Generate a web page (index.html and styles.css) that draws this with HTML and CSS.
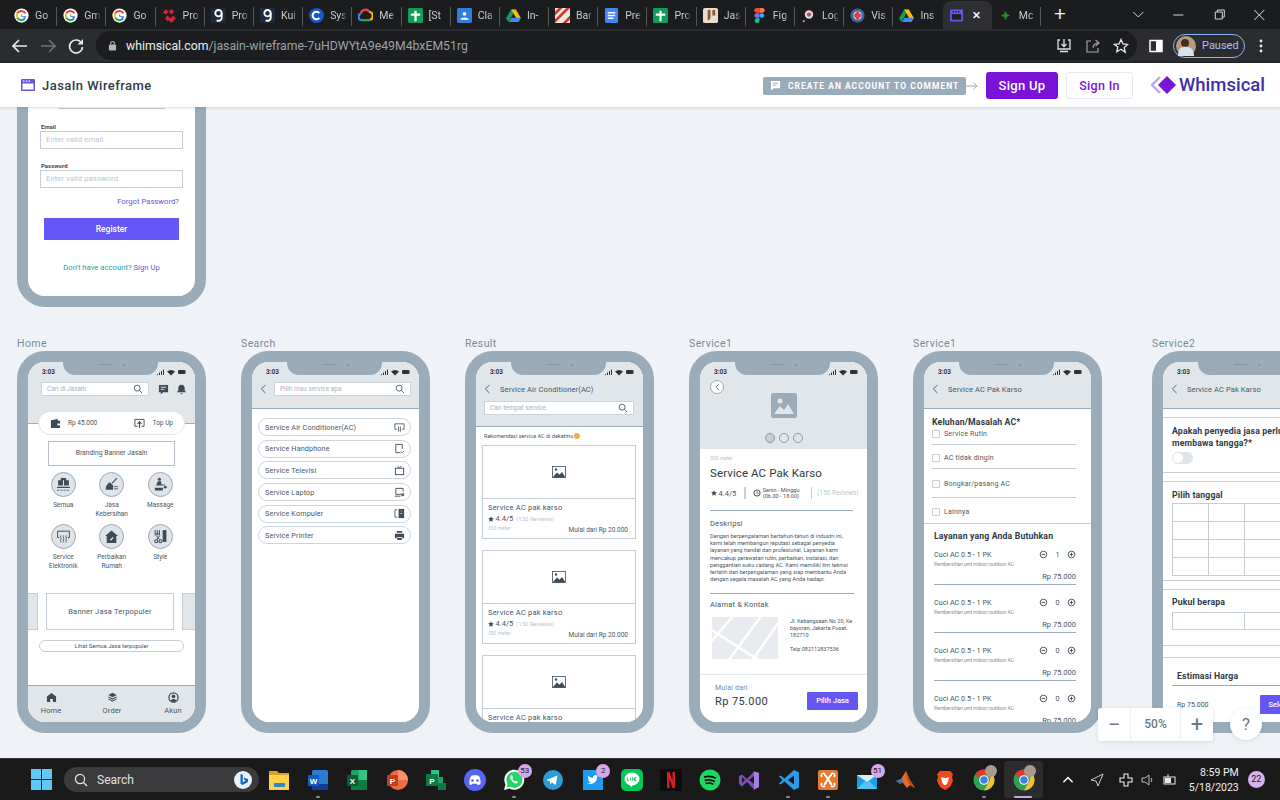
FILE: index.html
```html
<!DOCTYPE html>
<html lang="id">
<head>
  <meta charset="UTF-8">
  <title>JasaIn Wireframe</title>
  <link rel="stylesheet" href="styles.css">
</head>
<body>

<!-- icon sprites -->
<svg class="defs" xmlns="http://www.w3.org/2000/svg">
  <symbol id="f-google" viewBox="0 0 16 16">
    <circle cx="8" cy="8" r="7.6" fill="#fff"/>
    <path d="M12.2 5.6A5 5 0 0 0 3.5 5.7" fill="none" stroke="#ea4335" stroke-width="2.2"/>
    <path d="M3.5 5.7a5 5 0 0 0 0 4.6" fill="none" stroke="#fbbc05" stroke-width="2.2"/>
    <path d="M3.5 10.3a5 5 0 0 0 8.2.9" fill="none" stroke="#34a853" stroke-width="2.2"/>
    <path d="M8 7v2h4.6a5 5 0 0 1-1 2.3L10.2 10" fill="#4285f4" stroke="#4285f4" stroke-width=".8"/>
  </symbol>
  <symbol id="f-zig" viewBox="0 0 16 16">
    <path d="M1 5l3-4 3 3 3-3 3 3-3 3-3-3-3 3zM3 11l3-3 3 3 3-3 3 3-5 5-3-3-1 1z" fill="#d8222f"/>
  </symbol>
  <symbol id="f-nine" viewBox="0 0 16 16">
    <rect width="16" height="16" fill="#1e2b3a"/>
    <circle cx="8" cy="5.5" r="3.4" fill="none" stroke="#fff" stroke-width="2"/>
    <path d="M11.4 5.5v5c0 2.5-2 3.5-5.5 3" fill="none" stroke="#fff" stroke-width="2"/>
  </symbol>
  <symbol id="f-c" viewBox="0 0 16 16">
    <circle cx="8" cy="8" r="8" fill="#1a56c4"/>
    <path d="M11 5.5a4 4 0 1 0 0 5" fill="none" stroke="#fff" stroke-width="2.2"/>
  </symbol>
  <symbol id="f-cloud" viewBox="0 0 16 16">
    <path d="M4 13a3.6 3.6 0 0 1-1-7" fill="none" stroke="#4285f4" stroke-width="2.4"/>
    <path d="M3 6a5 5 0 0 1 9-2" fill="none" stroke="#ea4335" stroke-width="2.4"/>
    <path d="M12 4a4.5 4.5 0 0 1 1 8.6" fill="none" stroke="#fbbc05" stroke-width="2.4"/>
    <path d="M13 13H4" stroke="#34a853" stroke-width="2.4"/>
  </symbol>
  <symbol id="f-sheet" viewBox="0 0 16 16">
    <rect width="16" height="16" rx="1.5" fill="#0f9d58"/>
    <path d="M8 3v11M3 7h10" stroke="#fff" stroke-width="2.4"/>
  </symbol>
  <symbol id="f-class" viewBox="0 0 16 16">
    <rect width="16" height="16" rx="1.5" fill="#2f7de1"/>
    <circle cx="8" cy="6.2" r="2" fill="#fff"/>
    <path d="M3.5 12.5c.5-3 8.5-3 9 0z" fill="#fff"/>
  </symbol>
  <symbol id="f-drive" viewBox="0 0 16 16">
    <path d="M5.5 1.5h5L5 11 2.5 15 0 11z" fill="#0f9d58"/>
    <path d="M10.5 1.5L16 11h-5L5.5 1.5z" fill="#fbbc05"/>
    <path d="M3 15l2.8-4.5H16L13.5 15z" fill="#4285f4"/>
  </symbol>
  <symbol id="f-stripes" viewBox="0 0 16 16">
    <rect width="16" height="16" fill="#f1e6dc"/>
    <path d="M0 4l4-4h4L0 8zM0 12L12 0h4L0 16zM8 16L16 8v4l-4 4z" fill="#c93a2f"/>
  </symbol>
  <symbol id="f-docs" viewBox="0 0 16 16">
    <rect x="1" width="14" height="16" rx="1.5" fill="#4285f4"/>
    <path d="M4 5h8M4 8h8M4 11h6" stroke="#fff" stroke-width="1.5"/>
  </symbol>
  <symbol id="f-jas" viewBox="0 0 16 16">
    <rect width="16" height="16" rx="2" fill="#e8dccb"/>
    <path d="M5 2h3v8c0 2-1.5 3-3 3zM10 2h3v6h-3z" fill="#8a5a3a"/>
  </symbol>
  <symbol id="f-figma" viewBox="0 0 16 16">
    <path d="M5 0h3v5H5a2.5 2.5 0 0 1 0-5z" fill="#f24e1e"/>
    <path d="M8 0h3a2.5 2.5 0 0 1 0 5H8z" fill="#ff7262"/>
    <path d="M5 5.5h3v5H5a2.5 2.5 0 0 1 0-5z" fill="#a259ff"/>
    <circle cx="10.5" cy="8" r="2.5" fill="#1abcfe"/>
    <path d="M5 11h3v2.5a2.5 2.5 0 1 1-3-2.5z" fill="#0acf83"/>
  </symbol>
  <symbol id="f-log" viewBox="0 0 16 16">
    <circle cx="8.5" cy="7" r="4.5" fill="#d9d9e6"/>
    <circle cx="8.5" cy="7" r="2.2" fill="#c8443d"/>
    <circle cx="3" cy="14" r="1.2" fill="#6fa0d8"/>
  </symbol>
  <symbol id="f-vis" viewBox="0 0 16 16">
    <circle cx="8" cy="8" r="7.5" fill="#2f6da6"/>
    <circle cx="8" cy="8" r="4.5" fill="#e9e9ef"/>
    <path d="M8 3l4.5 5L8 13 3.5 8z" fill="#d9414c"/>
  </symbol>
  <symbol id="f-whim" viewBox="0 0 16 16">
    <rect x="1" y="1.5" width="14" height="13" rx="1.5" fill="#6557e8"/>
    <rect x="3" y="6.5" width="10" height="6" fill="#1f2023"/>
    <path d="M3.5 4H5M6.5 4H8M9.5 4H11" stroke="#1f2023" stroke-width="1.5"/>
  </symbol>
  <symbol id="f-mc" viewBox="0 0 16 16">
    <path d="M8 3l1.5 3.5L13 8l-3.5 1.5L8 13 6.5 9.5 3 8l3.5-1.5z" fill="#1f8a2c"/>
  </symbol>

  <symbol id="i-search" viewBox="0 0 12 12">
    <circle cx="5" cy="5" r="3.6" fill="none" stroke="currentColor" stroke-width="1"/>
    <path d="M7.8 7.8l3 3" stroke="currentColor" stroke-width="1"/>
  </symbol>
  <symbol id="i-back" viewBox="0 0 8 12">
    <path d="M6.5 1L1.5 6l5 5" fill="none" stroke="currentColor" stroke-width="1"/>
  </symbol>
  <symbol id="i-chat" viewBox="0 0 12 12">
    <path d="M1 1h10v8H5.5L3 11.5V9H1z" fill="currentColor"/>
    <path d="M3 3.5h6M3 5.8h4" stroke="#e1e6ea" stroke-width="1"/>
  </symbol>
  <symbol id="i-bell" viewBox="0 0 12 12">
    <path d="M6 .8c2.4 0 3.5 1.8 3.5 4v2.4L11 9H1l1.5-1.8V4.8C2.5 2.6 3.6.8 6 .8z" fill="currentColor"/>
    <path d="M4.8 10h2.4a1.2 1.2 0 0 1-2.4 0z" fill="currentColor"/>
  </symbol>
  <symbol id="i-wallet" viewBox="0 0 12 12">
    <path d="M1 2.5L8.5 1v2H11v8H1z" fill="currentColor"/>
    <rect x="8" y="6" width="3" height="2" fill="#fff"/>
  </symbol>
  <symbol id="i-topup" viewBox="0 0 12 12">
    <path d="M4 9H1V1.5h10V9H8" fill="none" stroke="currentColor" stroke-width="1"/>
    <path d="M6 11V4.5M3.8 6.5L6 4.2l2.2 2.3" fill="none" stroke="currentColor" stroke-width="1.2"/>
  </symbol>
  <symbol id="i-boxes" viewBox="0 0 14 14">
    <path d="M2 8h4.5V3H2zM7.5 8H12V3H7.5zM4.5 3V1h5v2zM1 9h12v1.2H1z" fill="currentColor"/>
    <path d="M1 12.3h12" stroke="currentColor" stroke-width=".8" stroke-dasharray="2 1"/>
  </symbol>
  <symbol id="i-broom" viewBox="0 0 14 14">
    <path d="M12 1L7.5 6" stroke="currentColor" stroke-width="1"/>
    <path d="M5.5 5l3 3v4H1.5c0-3 1.5-6 4-7z" fill="currentColor"/>
    <path d="M9.5 9H13M9.5 11H13" stroke="currentColor" stroke-width=".8"/>
  </symbol>
  <symbol id="i-massage" viewBox="0 0 14 14">
    <circle cx="6" cy="2" r="1.4" fill="currentColor"/>
    <path d="M4.5 4h3l.5 3h3v1H3z" fill="currentColor"/>
    <circle cx="11.5" cy="9.5" r="1.3" fill="currentColor"/>
    <path d="M1.5 10h8l-.5 2.5H2z" fill="currentColor"/>
  </symbol>
  <symbol id="i-ac" viewBox="0 0 14 14">
    <path d="M3 8H1.5V2h11v6H11" fill="none" stroke="currentColor" stroke-width=".9"/>
    <path d="M4.5 6c-.8 1.5.8 2.5 0 4s.5 1.5 0 2.5M7 6c-.8 1.5.8 2.5 0 4s.5 1.5 0 2.5M9.5 6c-.8 1.5.8 2.5 0 4s.5 1.5 0 2.5" fill="none" stroke="currentColor" stroke-width=".8"/>
  </symbol>
  <symbol id="i-house" viewBox="0 0 14 14">
    <path d="M7 1.5L13 6.5h-1.5V13h-9V6.5H1z" fill="currentColor"/>
    <path d="M6 10.5L8.5 8" stroke="#dfe4e9" stroke-width="1.2"/>
  </symbol>
  <symbol id="i-style" viewBox="0 0 14 14">
    <path d="M2 1v5M4 1v5M6 1v5M2 4.5h4" stroke="currentColor" stroke-width=".9"/>
    <rect x="9" y="1" width="3.5" height="11" fill="currentColor"/>
    <path d="M3 6l3 4M6.5 6l-3 4" stroke="currentColor" stroke-width=".9"/>
    <circle cx="3" cy="11.5" r="1.4" fill="none" stroke="currentColor"/>
    <circle cx="7" cy="11.5" r="1.4" fill="none" stroke="currentColor"/>
  </symbol>
  <symbol id="i-home" viewBox="0 0 12 12">
    <path d="M6 1L11 5v6H7.5V7.5h-3V11H1V5z" fill="currentColor"/>
  </symbol>
  <symbol id="i-order" viewBox="0 0 12 12">
    <path d="M6 .8l4.5 2.4L6 5.6 1.5 3.2z" fill="currentColor"/>
    <path d="M1.5 5.3L6 7.7l4.5-2.4M1.5 7.5L6 9.9l4.5-2.4" fill="none" stroke="currentColor" stroke-width="1.1"/>
  </symbol>
  <symbol id="i-user" viewBox="0 0 12 12">
    <circle cx="6" cy="6" r="5" fill="none" stroke="currentColor" stroke-width="1.4"/>
    <circle cx="6" cy="4.8" r="2" fill="currentColor"/>
    <path d="M2.8 9.5c1-2.4 5.4-2.4 6.4 0L6 11z" fill="currentColor"/>
  </symbol>
  <symbol id="i-air" viewBox="0 0 12 12">
    <path d="M3 8H1V2h10v6H9" fill="none" stroke="currentColor" stroke-width=".9"/>
    <path d="M5 5v5.5M7 5v5.5" stroke="currentColor" stroke-width=".9"/>
  </symbol>
  <symbol id="i-phone" viewBox="0 0 12 12">
    <path d="M7 10.5H2v-9h7v5" fill="none" stroke="currentColor" stroke-width="1"/>
    <path d="M7.5 9.5l1.3 1.3 2-2" fill="none" stroke="currentColor" stroke-width=".9"/>
  </symbol>
  <symbol id="i-tv" viewBox="0 0 12 12">
    <rect x="1.5" y="3.5" width="9" height="7" fill="none" stroke="currentColor" stroke-width="1"/>
    <path d="M4 1l2 2.5L8 1" fill="none" stroke="currentColor" stroke-width=".9"/>
  </symbol>
  <symbol id="i-laptop" viewBox="0 0 12 12">
    <path d="M8 8H2V1.5h8V5" fill="none" stroke="currentColor" stroke-width="1"/>
    <path d="M1 10h6" stroke="currentColor" stroke-width="1"/>
    <path d="M8 7l3 3M11 7l-3 3" stroke="currentColor" stroke-width="1.1"/>
  </symbol>
  <symbol id="i-pc" viewBox="0 0 12 12">
    <path d="M3.5 2H1v8h2.5" fill="none" stroke="currentColor" stroke-width=".9"/>
    <rect x="5" y="1" width="6" height="10" fill="currentColor"/>
    <path d="M8 3v.5M8 5.5v1" stroke="#fff" stroke-width="1.3"/>
  </symbol>
  <symbol id="i-printer" viewBox="0 0 12 12">
    <path d="M3 1h6v2H3z" fill="currentColor"/>
    <path d="M1 4h10v5H9V7.500H3V9H1z" fill="currentColor"/>
    <path d="M3.5 8.5h5V11h-5z" fill="currentColor"/>
  </symbol>
  <symbol id="i-picture" viewBox="0 0 14 12">
    <rect x=".5" y=".5" width="13" height="11" fill="#fff" stroke="currentColor" stroke-width=".8"/>
    <circle cx="4" cy="3.5" r="1.2" fill="currentColor"/>
    <path d="M.5 11.5L5 6.5l2.500 2.200L10 6l3.500 5.500z" fill="currentColor"/>
  </symbol>
  <symbol id="i-hero" viewBox="0 0 26 25">
    <rect width="26" height="25" rx="2" fill="#9aabb9"/>
    <circle cx="9" cy="8" r="2.5" fill="#e1e6ea"/>
    <path d="M3 21l6-8 4 4 4-6 6 10z" fill="#e1e6ea"/>
  </symbol>
  <symbol id="i-star" viewBox="0 0 10 10">
    <path d="M5 .5l1.400 3 3.300.4-2.400 2.200.6 3.300L5 7.800 2.100 9.400l.6-3.300L.3 3.900l3.300-.4z" fill="currentColor"/>
  </symbol>
  <symbol id="i-clock" viewBox="0 0 10 10">
    <circle cx="5" cy="5" r="3.9" fill="none" stroke="currentColor" stroke-width="1.2"/>
    <path d="M5 2.8v2.400H7" fill="none" stroke="currentColor" stroke-width=".9"/>
  </symbol>
  <symbol id="i-minus" viewBox="0 0 10 10">
    <circle cx="5" cy="5" r="3.7" fill="none" stroke="currentColor" stroke-width="1"/>
    <path d="M3 5h4" stroke="currentColor" stroke-width="1"/>
  </symbol>
  <symbol id="i-plus" viewBox="0 0 10 10">
    <circle cx="5" cy="5" r="3.7" fill="none" stroke="currentColor" stroke-width="1"/>
    <path d="M3 5h4M5 3v4" stroke="currentColor" stroke-width="1"/>
  </symbol>

  <symbol id="t-word" viewBox="0 0 22 22">
    <rect x="5" y="1" width="16" height="20" rx="1.5" fill="#2b7cd3"/>
    <rect x="5" y="15" width="16" height="6" fill="#103f91"/>
    <rect x="1" y="6" width="11" height="11" rx="1" fill="#185abd"/>
    <text x="6.5" y="14.5" font-size="8" font-weight="700" text-anchor="middle" fill="#fff" font-family="Liberation Sans, sans-serif">W</text>
  </symbol>
  <symbol id="t-excel" viewBox="0 0 22 22">
    <rect x="5" y="1" width="16" height="20" rx="1.5" fill="#21a366"/>
    <rect x="13" y="1" width="8" height="10" fill="#33c481"/>
    <rect x="5" y="11" width="16" height="10" fill="#107c41"/>
    <rect x="1" y="6" width="11" height="11" rx="1" fill="#0e5c2f"/>
    <text x="6.5" y="14.5" font-size="8" font-weight="700" text-anchor="middle" fill="#fff" font-family="Liberation Sans, sans-serif">X</text>
  </symbol>
  <symbol id="t-ppt" viewBox="0 0 22 22">
    <circle cx="12" cy="11" r="10" fill="#ed6c47"/>
    <path d="M12 1a10 10 0 0 1 10 10H12z" fill="#ff8f6b"/>
    <rect x="1" y="6" width="11" height="11" rx="1" fill="#c43e1c"/>
    <text x="6.5" y="14.5" font-size="8" font-weight="700" text-anchor="middle" fill="#fff" font-family="Liberation Sans, sans-serif">P</text>
  </symbol>
  <symbol id="t-project" viewBox="0 0 22 22">
    <rect x="6" y="1" width="8" height="8" fill="#33c481"/>
    <rect x="10" y="8" width="8" height="7" fill="#21a366"/>
    <rect x="13" y="14" width="8" height="7" fill="#107c41"/>
    <rect x="1" y="5" width="12" height="12" rx="1" fill="#0e7a43"/>
    <text x="7" y="14.5" font-size="8" font-weight="700" text-anchor="middle" fill="#fff" font-family="Liberation Sans, sans-serif">P</text>
  </symbol>
  <symbol id="t-discord" viewBox="0 0 22 22">
    <circle cx="11" cy="11" r="11" fill="#5865f2"/>
    <path d="M5.5 15c-.5-3 .3-6 1.500-8 1-.5 2-.7 2.500-.7h3c.5 0 1.500.2 2.500.7 1.200 2 2 5 1.500 8-1 .7-2 1-2.800 1l-.8-1.300h-4.800L7.300 16c-.8 0-1.800-.3-1.800-1z" fill="#fff"/>
    <circle cx="8.5" cy="11.5" r="1.3" fill="#5865f2"/><circle cx="13.5" cy="11.5" r="1.3" fill="#5865f2"/>
  </symbol>
  <symbol id="t-whatsapp" viewBox="0 0 22 22">
    <path d="M1 21l1.500-5.500A10 10 0 1 1 6.500 19.500z" fill="#fff"/>
    <path d="M3.5 18.500l1-3.500A8 8 0 1 1 7 17.600z" fill="#25d366"/>
    <path d="M8 6.500c-1.500 1-1 3 .5 5s4 3.500 5.500 3l1-1.500-2.200-1.300-1 .8c-1-.5-2-1.500-2.500-2.700l.8-1-1-2.500z" fill="#fff"/>
  </symbol>
  <symbol id="t-telegram" viewBox="0 0 22 22">
    <circle cx="11" cy="11" r="10" fill="#2e9bd6"/>
    <path d="M4.5 11l11-4.500-1.800 9.500-3.700-2.500-1.800 1.800-.3-3z" fill="#fff"/>
  </symbol>
  <symbol id="t-twitter" viewBox="0 0 22 22">
    <rect x="1" y="1" width="20" height="20" fill="#1d9bf0"/>
    <path d="M5 14c5 2.500 10-.5 10-6l1.500-1.500-1.800.3C14 5.500 11 5.700 10.800 9 9 8.800 7.500 8 6.300 6.700c-.5 1.300-.2 2.700 1 3.500l-1.300-.2c.1 1.300 1 2 2.200 2.400l-1.200.1c.4.800 1 1.100 1.900 1.200-.8.500-1.800.6-2.900.3z" fill="#fff"/>
  </symbol>
  <symbol id="t-line" viewBox="0 0 22 22">
    <rect width="22" height="22" rx="5" fill="#06c755"/>
    <ellipse cx="11" cy="10" rx="7.5" ry="6.5" fill="#fff"/>
    <path d="M9 15.500h3L10 18.500z" fill="#fff"/>
    <path d="M6.500 8.500v3h1.500M9.500 8.500v3M11.500 11.500v-3l2 3v-3M15.500 8.500h-1.200v3h1.200" fill="none" stroke="#06c755" stroke-width=".8"/>
  </symbol>
  <symbol id="t-netflix" viewBox="0 0 22 22">
    <rect width="22" height="22" fill="#0c0c0c"/>
    <path d="M7 3h2.500l3 9V3H15v16h-2.500l-3-9v9H7z" fill="#d81f26"/>
  </symbol>
  <symbol id="t-spotify" viewBox="0 0 22 22">
    <circle cx="11" cy="11" r="10.5" fill="#1ed760"/>
    <path d="M5 8c4-1 8.500-.7 12 1.200M5.800 11.300c3.500-.8 7-.5 10 1.200M6.500 14.300c3-.6 5.500-.3 8 1" fill="none" stroke="#111" stroke-width="1.7"/>
  </symbol>
  <symbol id="t-vs" viewBox="0 0 22 22">
    <path d="M1 7l3-1.500 5 4.500 7-7.500L21 4v14l-5 2.500-7-7.500-5 4.500L1 15z" fill="#7c4dbd"/>
    <path d="M4 8v6l3-3zM16 7l-5 4 5 4z" fill="#1a1a1b"/>
    <path d="M16 2.500L21 4v14l-5 2.500z" fill="#a67fdc"/>
  </symbol>
  <symbol id="t-vscode" viewBox="0 0 22 22">
    <path d="M16 1l5 2.500v15L16 21 6.500 12.500 2.500 15.500 1 14.500 4.500 11 1 7.500l1.500-1L6.500 9.500z" fill="#2a9be8"/>
    <path d="M16 6.500L10 11l6 4.500z" fill="#1a1a1b"/>
  </symbol>
  <symbol id="t-xampp" viewBox="0 0 22 22">
    <rect x="1" y="1" width="20" height="20" rx="2" fill="#e67a31"/>
    <path d="M7 6c3 0 5 7 8 10M15 6c-3 0-5 7-8 10" fill="none" stroke="#fff" stroke-width="2"/>
    <path d="M5 8a2 2 0 0 1 3-3M17 8a2 2 0 0 0-3-3M5 14a2 2 0 0 0 3 3M17 14a2 2 0 0 1-3 3" fill="none" stroke="#fff" stroke-width="1.6"/>
  </symbol>
  <symbol id="t-mail" viewBox="0 0 22 22">
    <path d="M1 6h20v14H1z" fill="#1b9fe8"/>
    <path d="M1 6l10 7 10-7z" fill="#d6f1fc"/>
    <path d="M1 20l8-8 2 1.400L13 12l8 8z" fill="#55c5f3"/>
  </symbol>
  <symbol id="t-matlab" viewBox="0 0 22 22">
    <path d="M1 12l5-2 5-8 4 9 5 8-5-3-3 3-4-5z" fill="#e56b2a"/>
    <path d="M1 12l5-2 3 3-4 2z" fill="#4472a8"/>
    <path d="M11 2l4 9 5 8-5-3-3-6z" fill="#bb4a20"/>
  </symbol>
  <symbol id="t-brave" viewBox="0 0 22 22">
    <path d="M6 2h10l3 3-1 3 1 4-3 6-5 3-5-3-3-6 1-4-1-3z" fill="#f2481c"/>
    <path d="M7 8l3 1h2l3-1-1 5-2 3h-2l-2-3z" fill="#fff"/>
  </symbol>
  <symbol id="t-chrome" viewBox="0 0 22 22">
    <circle cx="11" cy="11" r="10.5" fill="#2da44e"/>
    <path d="M11 .5a10.500 10.500 0 0 1 9.100 5.300H11a5.200 5.200 0 0 0-4.900 3.400L2.300 5A10.500 10.500 0 0 1 11 .5z" fill="#e3382f"/>
    <path d="M20.100 5.800A10.500 10.500 0 0 1 11 21.500l4.500-7.900a5.200 5.200 0 0 0 0-7.800z" fill="#fbc02d"/>
    <circle cx="11" cy="11" r="4.8" fill="#fff"/>
    <circle cx="11" cy="11" r="3.7" fill="#3f7fe6"/>
  </symbol>
  <symbol id="t-folder" viewBox="0 0 22 22">
    <path d="M1 2h8l2 2h10v4H1z" fill="#d9a21f"/>
    <rect x="1" y="6" width="20" height="15" fill="#fbd24e"/>
    <rect x="6" y="14" width="11" height="4" rx=".8" fill="#2f86c9"/>
  </symbol>
  <symbol id="t-bing" viewBox="0 0 18 18">
    <circle cx="9" cy="9" r="9" fill="#e8f2fb"/>
    <path d="M6.500 3l2.300.8v7.500l3-1.700-1.400-.7-.8-2.300 4.400 1.500v2.800l-5.300 3.100-2.200-1.300z" fill="#1668c4"/>
  </symbol>
</svg>

<!-- вкладки браузера -->
<div class="tabbar">
  <div class="tab"><svg class="fav"><use href="#f-google"/></svg><span>Go</span></div>
  <div class="tab"><svg class="fav"><use href="#f-google"/></svg><span>Gm</span></div>
  <div class="tab"><svg class="fav"><use href="#f-google"/></svg><span>Go</span></div>
  <div class="tab"><svg class="fav"><use href="#f-zig"/></svg><span>Pro</span></div>
  <div class="tab"><svg class="fav"><use href="#f-nine"/></svg><span>Pro</span></div>
  <div class="tab"><svg class="fav"><use href="#f-nine"/></svg><span>Kui</span></div>
  <div class="tab"><svg class="fav"><use href="#f-c"/></svg><span>Sys</span></div>
  <div class="tab"><svg class="fav"><use href="#f-cloud"/></svg><span>Me</span></div>
  <div class="tab"><svg class="fav"><use href="#f-sheet"/></svg><span>[St</span></div>
  <div class="tab"><svg class="fav"><use href="#f-class"/></svg><span>Cla</span></div>
  <div class="tab"><svg class="fav"><use href="#f-drive"/></svg><span>In-</span></div>
  <div class="tab"><svg class="fav"><use href="#f-stripes"/></svg><span>Bar</span></div>
  <div class="tab"><svg class="fav"><use href="#f-docs"/></svg><span>Pre</span></div>
  <div class="tab"><svg class="fav"><use href="#f-sheet"/></svg><span>Pro</span></div>
  <div class="tab"><svg class="fav"><use href="#f-jas"/></svg><span>Jas</span></div>
  <div class="tab"><svg class="fav"><use href="#f-figma"/></svg><span>Fig</span></div>
  <div class="tab"><svg class="fav"><use href="#f-log"/></svg><span>Log</span></div>
  <div class="tab"><svg class="fav"><use href="#f-vis"/></svg><span>Vis</span></div>
  <div class="tab tab-flat"><svg class="fav"><use href="#f-drive"/></svg><span>Ins</span></div>
  <div class="tab tab-active"><svg class="fav"><use href="#f-whim"/></svg><b class="tab-x">×</b></div>
  <div class="tab"><svg class="fav"><use href="#f-mc"/></svg><span>Mc</span></div>
  <div class="new-tab">+</div>
  <div class="win-btns">
    <svg class="win-btn" viewBox="0 0 40 29"><path d="M15 12l5 5 5-5" fill="none" stroke="#d5d7da" stroke-width="1"/></svg>
    <svg class="win-btn" viewBox="0 0 40 29"><path d="M15 15h10" stroke="#d5d7da" stroke-width="1"/></svg>
    <svg class="win-btn" viewBox="0 0 40 29"><path d="M16 12h7v7h-7zM18 12v-2h7v7h-2" fill="none" stroke="#d5d7da" stroke-width="1"/></svg>
    <svg class="win-btn" viewBox="0 0 40 29"><path d="M15 10l10 10M25 10L15 20" stroke="#e4e5e7" stroke-width="1"/></svg>
  </div>
</div>

<!-- адресная строка -->
<div class="toolbar">
  <svg class="tool" viewBox="0 0 28 28"><path d="M21 14H8M13 8l-6 6 6 6" fill="none" stroke="#e8eaed" stroke-width="1.7"/></svg>
  <svg class="tool" viewBox="0 0 28 28"><path d="M7 14h13M15 8l6 6-6 6" fill="none" stroke="#6d6f73" stroke-width="1.7"/></svg>
  <svg class="tool" viewBox="0 0 28 28"><path d="M19.5 11a6.5 6.5 0 1 0 1 4" fill="none" stroke="#e8eaed" stroke-width="1.7"/><path d="M21 7v5.5h-5.5z" fill="#e8eaed"/></svg>
  <div class="omni">
    <svg class="lock" viewBox="0 0 10 12"><rect x="1" y="5" width="8" height="6.5" rx="1" fill="#b4b6ba"/><path d="M3 5V3.500a2 2 0 0 1 4 0V5" fill="none" stroke="#b4b6ba" stroke-width="1.2"/></svg>
    <span class="url"><b>whimsical.com</b>/jasain-wireframe-7uHDWYtA9e49M4bxEM51rg</span>
    <div class="omni-icons">
      <svg class="tool-sm" viewBox="0 0 16 16"><path d="M4 2H2v9h12V2h-2M8 1v7M5.500 6L8 8.500 10.500 6M4 13.500h8" fill="none" stroke="#dfe1e5" stroke-width="1.3"/></svg>
      <svg class="tool-sm" viewBox="0 0 16 16"><path d="M6 3H2v11h11v-4M8 10c0-3 2-5 5-5M10.500 2L14 5l-3.500 3" fill="none" stroke="#a9abaf" stroke-width="1.1"/></svg>
      <svg class="tool-sm" viewBox="0 0 16 16"><path d="M8 1.500l2 4.400 4.700.5-3.500 3.100 1 4.700L8 11.300 3.800 13.700l1-4.700L1.300 6.400 6 5.900z" fill="none" stroke="#e8eaed" stroke-width="1.3"/></svg>
    </div>
  </div>
  <svg class="panel" viewBox="0 0 14 14"><rect x="1" y="1.5" width="12" height="11" fill="none" stroke="#fff" stroke-width="1.5"/><rect x="7" y="1.5" width="6" height="11" fill="#fff"/></svg>
  <div class="profile">
    <svg class="avatar" viewBox="0 0 20 20"><circle cx="10" cy="10" r="10" fill="#b79a7d"/><circle cx="9" cy="7" r="4" fill="#3f2f25"/><path d="M2 20c0-8 4-10 9-9 5 0 7 4 7 9z" fill="#dbe2ea"/></svg>
    <span>Paused</span>
  </div>
  <svg class="kebab" viewBox="0 0 4 16"><circle cx="2" cy="3" r="1.4" fill="#e8eaed"/><circle cx="2" cy="8" r="1.4" fill="#e8eaed"/><circle cx="2" cy="13" r="1.4" fill="#e8eaed"/></svg>
</div>

<!-- шапка whimsical -->
<header class="app-head">
  <svg class="doc-icon" viewBox="0 0 14 12"><rect width="14" height="12" rx="1" fill="#6557d8"/><rect x="1.5" y="4.5" width="11" height="6" fill="#fff"/><path d="M2 2.200h1.500M4.800 2.200h1.500M7.600 2.200h1.500" stroke="#fff" stroke-width="1.2"/></svg>
  <span class="doc-title">JasaIn Wireframe</span>
  <div class="head-right">
    <div class="hint">
      <svg class="hint-icon" viewBox="0 0 12 12"><path d="M1 1h10v8H4l-3 2.500z" fill="#fff"/><path d="M3 3.500h6M3 5.800h4" stroke="#9aabb9"/></svg>
      Create an account to comment
    </div>
    <svg class="hint-arrow" viewBox="0 0 12 10"><path d="M0 5h11M7.500 1.500L11 5 7.500 8.500" fill="none" stroke="#9aabb9" stroke-width="1"/></svg>
    <div class="btn-up">Sign Up</div>
    <div class="btn-in">Sign In</div>
    <div class="logo">
      <svg class="logo-mark" viewBox="0 0 26 20"><path d="M9 2L1 10l8 8" fill="none" stroke="#b8a6f5" stroke-width="2.4"/><path d="M16 1l9 9-9 9-9-9z" fill="#7a14d8"/></svg>
      <span>Whimsical</span>
    </div>
  </div>
</header>

<!-- холст с экранами -->
<main class="canvas">

  <div class="phone phone-reg">
    <div class="screen screen-reg">
      <div class="stub"></div>
      <label class="f-label">Email</label>
      <div class="f-input">Enter valid email</div>
      <label class="f-label f-label-2">Password</label>
      <div class="f-input">Enter valid password</div>
      <div class="forgot">Forgot Password?</div>
      <div class="btn-register">Register</div>
      <div class="have-acc">Don't have account? <span>Sign Up</span></div>
    </div>
  </div>

  <div class="frame-name name-home">Home</div>
  <div class="phone phone-home">
    <div class="notch"><i></i><u></u></div>
    <div class="screen">
      <div class="head head-home">
        <div class="status"><span>3:03</span><svg class="sig" viewBox="0 0 30 8"><path d="M1 7h1V6H1zM3 7h1V4.500H3zM5 7h1V3H5zM7 7h1V1.500H7z" fill="#333"/><path d="M11 3.500c2.500-2 5.500-2 8 0L15 7.500z" fill="#333"/><rect x="22" y="2" width="7.500" height="4" rx="1" fill="#333"/></svg></div>
        <div class="home-row">
          <div class="search search-home"><span>Cari di Jasaln</span><svg class="ico-s"><use href="#i-search"/></svg></div>
          <svg class="ico-m"><use href="#i-chat"/></svg>
          <svg class="ico-m"><use href="#i-bell"/></svg>
        </div>
      </div>
      <div class="wallet">
        <svg class="ico-m"><use href="#i-wallet"/></svg>
        <span class="wallet-amt">Rp 45.000</span>
        <svg class="ico-m"><use href="#i-topup"/></svg>
        <span>Top Up</span>
      </div>
      <div class="banner-top">Branding Banner Jasaln</div>
      <div class="cats">
        <div class="cat"><div class="cat-ring"><svg><use href="#i-boxes"/></svg></div>Semua</div>
        <div class="cat"><div class="cat-ring"><svg><use href="#i-broom"/></svg></div>Jasa Kebersihan</div>
        <div class="cat"><div class="cat-ring"><svg><use href="#i-massage"/></svg></div>Massage</div>
        <div class="cat"><div class="cat-ring"><svg><use href="#i-ac"/></svg></div>Service Elektronik</div>
        <div class="cat"><div class="cat-ring"><svg><use href="#i-house"/></svg></div>Perbaikan Rumah</div>
        <div class="cat"><div class="cat-ring"><svg><use href="#i-style"/></svg></div>Style</div>
      </div>
      <div class="carousel">
        <div class="car-side car-left"></div>
        <div class="car-main">Banner Jasa Terpopuler</div>
        <div class="car-side car-right"></div>
      </div>
      <div class="more-pill">Lihat Semua Jasa terpopuler</div>
      <nav class="bottom-nav">
        <div class="nav-item"><svg class="ico-m"><use href="#i-home"/></svg>Home</div>
        <div class="nav-item"><svg class="ico-m"><use href="#i-order"/></svg>Order</div>
        <div class="nav-item"><svg class="ico-m"><use href="#i-user"/></svg>Akun</div>
      </nav>
    </div>
  </div>

  <div class="frame-name name-search">Search</div>
  <div class="phone phone-search">
    <div class="notch"><i></i><u></u></div>
    <div class="screen">
      <div class="head head-46">
        <div class="status"><span>3:03</span><svg class="sig" viewBox="0 0 30 8"><path d="M1 7h1V6H1zM3 7h1V4.500H3zM5 7h1V3H5zM7 7h1V1.500H7z" fill="#333"/><path d="M11 3.500c2.500-2 5.500-2 8 0L15 7.500z" fill="#333"/><rect x="22" y="2" width="7.500" height="4" rx="1" fill="#333"/></svg></div>
        <div class="head-row">
          <svg class="ico-back"><use href="#i-back"/></svg>
          <div class="search search-grow"><span>Pilih mau service apa</span><svg class="ico-s"><use href="#i-search"/></svg></div>
        </div>
      </div>
      <div class="svc-list">
        <div class="svc">Service Air Conditioner(AC)<svg class="ico-m"><use href="#i-air"/></svg></div>
        <div class="svc">Service Handphone<svg class="ico-m"><use href="#i-phone"/></svg></div>
        <div class="svc">Service Televisi<svg class="ico-m"><use href="#i-tv"/></svg></div>
        <div class="svc">Service Laptop<svg class="ico-m"><use href="#i-laptop"/></svg></div>
        <div class="svc">Service Kompuler<svg class="ico-m"><use href="#i-pc"/></svg></div>
        <div class="svc">Service Printer<svg class="ico-m"><use href="#i-printer"/></svg></div>
      </div>
    </div>
  </div>

  <div class="frame-name name-result">Result</div>
  <div class="phone phone-result">
    <div class="notch"><i></i><u></u></div>
    <div class="screen">
      <div class="head head-64">
        <div class="status"><span>3:03</span><svg class="sig" viewBox="0 0 30 8"><path d="M1 7h1V6H1zM3 7h1V4.500H3zM5 7h1V3H5zM7 7h1V1.500H7z" fill="#333"/><path d="M11 3.500c2.500-2 5.500-2 8 0L15 7.500z" fill="#333"/><rect x="22" y="2" width="7.500" height="4" rx="1" fill="#333"/></svg></div>
        <div class="head-row">
          <svg class="ico-back"><use href="#i-back"/></svg>
          <span class="head-title">Service Air Conditioner(AC)</span>
        </div>
        <div class="search search-result"><span>Cari tempat service</span><svg class="ico-s"><use href="#i-search"/></svg></div>
      </div>
      <div class="rec">Rekomendasi service AC di dekatmu<span class="emoji"></span></div>
      <div class="cards">
        <div class="card">
          <div class="card-img"><svg><use href="#i-picture"/></svg></div>
          <div class="card-body">
            <div class="card-name">Service AC pak karso</div>
            <div class="card-rate"><svg class="ico-star"><use href="#i-star"/></svg>4.4/5 <span>(150 Reviews)</span></div>
            <div class="card-foot"><span class="meter">300 meter</span><span>Mulai dari Rp 20.000</span></div>
          </div>
        </div>
        <div class="card">
          <div class="card-img"><svg><use href="#i-picture"/></svg></div>
          <div class="card-body">
            <div class="card-name">Service AC pak karso</div>
            <div class="card-rate"><svg class="ico-star"><use href="#i-star"/></svg>4.4/5 <span>(150 Reviews)</span></div>
            <div class="card-foot"><span class="meter">300 meter</span><span>Mulai dari Rp 20.000</span></div>
          </div>
        </div>
        <div class="card">
          <div class="card-img"><svg><use href="#i-picture"/></svg></div>
          <div class="card-body">
            <div class="card-name">Service AC pak karso</div>
          </div>
        </div>
      </div>
    </div>
  </div>

  <div class="frame-name name-detail">Service1</div>
  <div class="phone phone-detail">
    <div class="notch"><i></i><u></u></div>
    <div class="screen">
      <div class="hero">
        <div class="status"><span>3:03</span><svg class="sig" viewBox="0 0 30 8"><path d="M1 7h1V6H1zM3 7h1V4.500H3zM5 7h1V3H5zM7 7h1V1.500H7z" fill="#333"/><path d="M11 3.500c2.500-2 5.500-2 8 0L15 7.500z" fill="#333"/><rect x="22" y="2" width="7.500" height="4" rx="1" fill="#333"/></svg></div>
        <div class="hero-back"><svg class="ico-back"><use href="#i-back"/></svg></div>
        <svg class="hero-img"><use href="#i-hero"/></svg>
        <div class="dots"><i class="dot-on"></i><i></i><i></i></div>
      </div>
      <div class="detail">
        <div class="meter">300 meter</div>
        <div class="detail-name">Service AC Pak Karso</div>
        <div class="detail-meta">
          <svg class="ico-star"><use href="#i-star"/></svg><span>4.4/5</span>
          <i class="vsep"></i>
          <svg class="ico-clock"><use href="#i-clock"/></svg>
          <span class="hours">Senin - Minggu<br>(06.00 - 18.00)</span>
          <i class="vsep vsep-2"></i>
          <span class="rev">(150 Reviews)</span>
        </div>
        <hr class="rule">
        <div class="sub-head">Deskripsi</div>
        <p class="desc">Dengan berpengalaman bertahun-tahun di industri ini,<br>kami telah membangun reputasi sebagai penyedia<br>layanan yang handal dan profesional. Layanan kami<br>mencakup perawatan rutin, perbaikan, instalasi, dan<br>penggantian suku cadang AC. Kami memiliki tim teknisi<br>terlatih dan berpengalaman yang siap membantu Anda<br>dengan segala masalah AC yang Anda hadapi.</p>
        <hr class="rule rule-2">
        <div class="sub-head sub-head-2">Alamat &amp; Kontak</div>
        <div class="addr-row">
          <svg class="map" viewBox="0 0 66 42"><rect width="66" height="42" fill="#e8ebf0"/><path d="M-2 12L48 44M22 -2L-2 26M50 -2L16 44M66 6L40 44" fill="none" stroke="#fff" stroke-width="2.5"/></svg>
          <div class="addr">Jl. Kebangsaan No 20, Ke<br>bayoran, Jakarta Pusat,<br>182710<div class="telp">Telp 082112837536</div></div>
        </div>
      </div>
      <div class="buy">
        <div><div class="buy-from">Mulai dari</div><div class="buy-price">Rp 75.000</div></div>
        <div class="btn-pick">Pilih Jasa</div>
      </div>
    </div>
  </div>

  <div class="frame-name name-form">Service1</div>
  <div class="phone phone-form">
    <div class="notch"><i></i><u></u></div>
    <div class="screen">
      <div class="head head-46">
        <div class="status"><span>3:03</span><svg class="sig" viewBox="0 0 30 8"><path d="M1 7h1V6H1zM3 7h1V4.500H3zM5 7h1V3H5zM7 7h1V1.500H7z" fill="#333"/><path d="M11 3.500c2.500-2 5.500-2 8 0L15 7.500z" fill="#333"/><rect x="22" y="2" width="7.500" height="4" rx="1" fill="#333"/></svg></div>
        <div class="head-row">
          <svg class="ico-back"><use href="#i-back"/></svg>
          <span class="head-title">Service AC Pak Karso</span>
        </div>
      </div>
      <div class="complaints">
        <div class="form-head">Keluhan/Masalah AC*</div>
        <div class="check"><i></i>Service Rutin</div>
        <div class="check"><i></i>AC tidak dingin</div>
        <div class="check check-wide"><i></i>Bongkar/pasang AC</div>
        <div class="check check-last"><i></i>Lainnya</div>
      </div>
      <div class="services">
        <div class="form-head form-head-2">Layanan yang Anda Butuhkan</div>
        <div class="svc-item">
          <div class="svc-top"><span>Cuci AC 0.5 - 1 PK</span><div class="stepper"><svg><use href="#i-minus"/></svg><b>1</b><svg><use href="#i-plus"/></svg></div></div>
          <div class="svc-sub">Pembersihan unit indoor/outdoor AC</div>
          <div class="svc-price">Rp 75.000</div>
        </div>
        <div class="svc-item">
          <div class="svc-top"><span>Cuci AC 0.5 - 1 PK</span><div class="stepper"><svg><use href="#i-minus"/></svg><b>0</b><svg><use href="#i-plus"/></svg></div></div>
          <div class="svc-sub">Pembersihan unit indoor/outdoor AC</div>
          <div class="svc-price">Rp 75.000</div>
        </div>
        <div class="svc-item">
          <div class="svc-top"><span>Cuci AC 0.5 - 1 PK</span><div class="stepper"><svg><use href="#i-minus"/></svg><b>0</b><svg><use href="#i-plus"/></svg></div></div>
          <div class="svc-sub">Pembersihan unit indoor/outdoor AC</div>
          <div class="svc-price">Rp 75.000</div>
        </div>
        <div class="svc-item">
          <div class="svc-top"><span>Cuci AC 0.5 - 1 PK</span><div class="stepper"><svg><use href="#i-minus"/></svg><b>0</b><svg><use href="#i-plus"/></svg></div></div>
          <div class="svc-sub">Pembersihan unit indoor/outdoor AC</div>
          <div class="svc-price">Rp 75.000</div>
        </div>
      </div>
    </div>
  </div>

  <div class="frame-name name-date">Service2</div>
  <div class="phone phone-date">
    <div class="notch"><i></i><u></u></div>
    <div class="screen">
      <div class="head head-46">
        <div class="status"><span>3:03</span></div>
        <div class="head-row">
          <svg class="ico-back"><use href="#i-back"/></svg>
          <span class="head-title">Service AC Pak Karso</span>
        </div>
      </div>
      <section class="band band-ask">
        <div class="form-head">Apakah penyedia jasa perlu<br>membawa tangga?*</div>
        <div class="toggle"><i></i></div>
      </section>
      <section class="band band-date">
        <div class="form-head">Pilih tanggal</div>
        <div class="date-grid">
          <i></i><i></i><i></i><i></i><i></i><i></i><i></i><i></i>
          <i></i><i></i><i></i><i></i><i></i><i></i><i></i><i></i>
        </div>
      </section>
      <section class="band band-time">
        <div class="form-head">Pukul berapa</div>
        <div class="time-grid"><i></i><i></i></div>
      </section>
      <section class="band band-total">
        <div class="form-head total-head">Estimasi Harga</div>
        <div class="total-row"><span>Rp 75.000</span><div class="btn-next">Selesai</div></div>
      </section>
    </div>
  </div>

  <div class="zoombox">
    <div class="z-btn">−</div>
    <div class="z-val">50%</div>
    <div class="z-btn">+</div>
  </div>
  <div class="help">?</div>
</main>

<!-- панель задач -->
<footer class="taskbar">
  <svg class="win-logo" viewBox="0 0 21 21"><path d="M0 0h10v10H0zM11 0h10v10H11zM0 11h10v10H0zM11 11h10v10H11z" fill="#5fc8f5"/></svg>
  <div class="task-search">
    <svg class="task-glass" viewBox="0 0 14 14"><circle cx="6" cy="6" r="4.6" fill="none" stroke="#e8e8e8" stroke-width="1.2"/><path d="M9.5 9.5L13 13" stroke="#e8e8e8" stroke-width="1.2"/></svg>
    <span>Search</span>
    <svg class="task-bing"><use href="#t-bing"/></svg>
  </div>
  <div class="task-apps">
    <div class="app"><svg><use href="#t-folder"/></svg></div>
    <div class="app app-open"><svg><use href="#t-word"/></svg></div>
    <div class="app"><svg><use href="#t-excel"/></svg></div>
    <div class="app"><svg><use href="#t-ppt"/></svg></div>
    <div class="app"><svg><use href="#t-project"/></svg></div>
    <div class="app"><svg><use href="#t-discord"/></svg></div>
    <div class="app app-open"><svg><use href="#t-whatsapp"/></svg><b class="count">53</b></div>
    <div class="app"><svg><use href="#t-telegram"/></svg></div>
    <div class="app"><svg><use href="#t-twitter"/></svg><b class="count">2</b></div>
    <div class="app"><svg><use href="#t-line"/></svg></div>
    <div class="app"><svg><use href="#t-netflix"/></svg></div>
    <div class="app"><svg><use href="#t-spotify"/></svg></div>
    <div class="app"><svg><use href="#t-vs"/></svg></div>
    <div class="app app-open"><svg><use href="#t-vscode"/></svg></div>
    <div class="app app-open"><svg><use href="#t-xampp"/></svg></div>
    <div class="app"><svg><use href="#t-mail"/></svg><b class="count">51</b></div>
    <div class="app"><svg><use href="#t-matlab"/></svg></div>
    <div class="app"><svg><use href="#t-brave"/></svg></div>
    <div class="app app-open"><svg><use href="#t-chrome"/></svg><i class="pfp"></i></div>
    <div class="app app-now"><svg><use href="#t-chrome"/></svg><i class="pfp"></i></div>
  </div>
  <div class="tray">
    <svg class="tray-i" viewBox="0 0 12 12"><path d="M2 8l4-4 4 4" fill="none" stroke="#f2f2f2" stroke-width="1.3"/></svg>
    <svg class="tray-i" viewBox="0 0 14 14"><path d="M13 1L1 7l5 1 2 5z" fill="none" stroke="#dcdcdc" stroke-width=".9"/></svg>
    <svg class="tray-i" viewBox="0 0 14 14"><path d="M5 1h4v4h4v4H9v4H5V9H1V5h4z" fill="none" stroke="#f0f0f0" stroke-width="1.1"/></svg>
    <svg class="tray-i" viewBox="0 0 14 14"><path d="M1 5h3l4-3v10L4 9H1z" fill="none" stroke="#cfcfcf" stroke-width=".9"/><path d="M10 5c1 1 1 3 0 4" fill="none" stroke="#cfcfcf" stroke-width=".9"/></svg>
    <svg class="tray-i" viewBox="0 0 14 14"><rect x="1" y="4" width="11" height="7" fill="none" stroke="#e8e8e8"/><rect x="2" y="5" width="6" height="5" fill="#e8e8e8"/><path d="M5 1v3" stroke="#e8e8e8"/></svg>
  </div>
  <div class="clock">8:59 PM<br>5/18/2023</div>
  <div class="notif">22</div>
</footer>

</body>
</html>
```

FILE: styles.css
```css
* {
  box-sizing: border-box;
}

html, body {
  margin: 0;
  padding: 0;
  height: 800px;
  overflow: hidden;
}

body {
  display: flex;
  flex-direction: column;
  font-family: Roboto, "Liberation Sans", sans-serif;
  background-color: #eff3f7;
}

.defs {
  display: none;
}

/* Вкладки браузера */
.tabbar {
  display: flex;
  align-items: flex-end;
  height: 29px;
  padding-left: 8px;
  background-color: #1b1c1e;
  flex: none;
}

.tab {
  display: flex;
  align-items: center;
  gap: 6px;
  width: 49.2px;
  height: 28px;
  padding-left: 6px;
  position: relative;
  overflow: hidden;
  color: #c9cbcf;
  font-size: 10.5px;
  border-right: 1px solid #55575b;
  border-image: linear-gradient(transparent 25%, #55575b 25%, #55575b 85%, transparent 85%) 1;
}

.tab span {
  width: 17px;
  white-space: nowrap;
  overflow: hidden;
  -webkit-mask-image: linear-gradient(90deg, #000 65%, transparent);
  mask-image: linear-gradient(90deg, #000 65%, transparent);
}

.tab-flat {
  border-right: none;
}

.tab-active {
  background-color: #2e2f32;
  border: none;
  border-radius: 8px 8px 0 0;
}

.tab-x {
  color: #fff;
  font-size: 15px;
  font-weight: 400;
  margin-left: 3px;
}

.fav {
  width: 15px;
  height: 15px;
  flex: none;
}

.new-tab {
  width: 38px;
  height: 28px;
  text-align: center;
  color: #f0f0f0;
  font-size: 21px;
  line-height: 26px;
  font-family: "Liberation Sans", sans-serif;
}

.win-btns {
  display: flex;
  margin-left: auto;
  align-self: flex-start;
}

.win-btn {
  width: 40.6px;
  height: 29px;
  flex: none;
}

/* Адресная строка */
.toolbar {
  display: flex;
  align-items: center;
  height: 34px;
  padding-left: 6px;
  background-color: #2b2c2f;
  border-bottom: 1px solid #1b1c1e;
  flex: none;
}

.tool {
  width: 28px;
  height: 28px;
  flex: none;
}

.omni {
  display: flex;
  align-items: center;
  width: 1041px;
  height: 29px;
  margin-left: 6px;
  padding: 0 8px 0 12px;
  background-color: #1c1d20;
  border-radius: 15px;
}

.lock {
  width: 9px;
  height: 11px;
  flex: none;
}

.url {
  margin-left: 9px;
  color: #9ea1a6;
  font-size: 12.25px;
  white-space: nowrap;
}

.url b {
  color: #eceef1;
  font-weight: 400;
}

.omni-icons {
  display: flex;
  gap: 12.5px;
  margin-left: auto;
}

.tool-sm {
  width: 16px;
  height: 16px;
}

.panel {
  width: 14px;
  height: 14px;
  margin-left: 12px;
  flex: none;
}

.profile {
  display: flex;
  align-items: center;
  gap: 6px;
  width: 72px;
  height: 24px;
  margin-left: 10px;
  padding-left: 2px;
  border: 1px solid #8ab4f8;
  border-radius: 12px;
  color: #a7c3f3;
  font-size: 11px;
}

.avatar {
  width: 20px;
  height: 20px;
}

.kebab {
  width: 4px;
  height: 16px;
  margin-left: 14px;
}

/* Шапка приложения */
.app-head {
  display: flex;
  align-items: center;
  height: 44px;
  padding: 0 15px 0 21px;
  background-color: #fff;
  box-shadow: 0 1px 3px rgba(60, 80, 100, 0.2);
  position: relative;
  z-index: 5;
  flex: none;
}

.doc-icon {
  width: 14px;
  height: 12px;
}

.doc-title {
  margin-left: 7px;
  color: #2e3a47;
  font-size: 13px;
  font-weight: 500;
  letter-spacing: 0.45px;
}

.head-right {
  display: flex;
  align-items: center;
  margin-left: auto;
}

.hint {
  display: flex;
  align-items: center;
  gap: 7px;
  width: 203px;
  height: 18px;
  margin-top: 1px;
  padding-left: 7px;
  background-color: #9aabb9;
  border-radius: 2px;
  color: #fff;
  font-size: 8.5px;
  font-weight: 700;
  letter-spacing: 1px;
  text-transform: uppercase;
  white-space: nowrap;
}

.hint-icon {
  width: 11px;
  height: 11px;
  flex: none;
}

.hint-arrow {
  width: 12px;
  height: 10px;
  margin: 1px 8px 0 0;
}

.btn-up {
  width: 72px;
  height: 27px;
  background-color: #7a12d8;
  border-radius: 3px;
  color: #fff;
  font-size: 13px;
  font-weight: 500;
  line-height: 27px;
  text-align: center;
  letter-spacing: 0.3px;
}

.btn-in {
  width: 67px;
  height: 27px;
  margin-left: 8px;
  border: 1px solid #e6eaee;
  border-radius: 3px;
  color: #7a12d8;
  font-size: 12.5px;
  font-weight: 500;
  line-height: 25px;
  text-align: center;
  letter-spacing: 0.3px;
}

.logo {
  display: flex;
  align-items: center;
  gap: 2px;
  margin-left: 18px;
  color: #3f2fa8;
  font-size: 18.5px;
  font-weight: 500;
}

.logo-mark {
  width: 26px;
  height: 20px;
}

/* Холст */
.canvas {
  flex: 1;
  position: relative;
  overflow: hidden;
  background-color: #eff3f7;
}

.frame-name {
  position: absolute;
  top: 230px;
  color: #7c8a99;
  font-size: 10.5px;
  letter-spacing: 0.4px;
}

.name-home { left: 17px; }
.name-search { left: 241px; }
.name-result { left: 465px; }
.name-detail { left: 689px; }
.name-form { left: 913px; }
.name-date { left: 1152px; }

.phone {
  position: absolute;
  top: 244px;
  width: 189px;
  height: 382px;
  border: 11px solid #9aabb9;
  border-radius: 28px;
  background-color: #fff;
}

.phone-reg { left: 17px; top: -182px; }
.phone-home { left: 17px; }
.phone-search { left: 241px; }
.phone-result { left: 465px; }
.phone-detail { left: 689px; }
.phone-form { left: 913px; }
.phone-date { left: 1152px; }

.notch {
  position: absolute;
  top: 0;
  left: 35px;
  z-index: 2;
  width: 95px;
  height: 13px;
  background-color: #9aabb9;
  border-radius: 0 0 12px 12px;
}

.notch i {
  position: absolute;
  top: 2px;
  left: 36px;
  width: 14px;
  height: 1px;
  background-color: #8796a4;
}

.notch u {
  position: absolute;
  top: 2px;
  left: 60px;
  width: 2px;
  height: 2px;
  background-color: #8796a4;
}

.screen {
  display: flex;
  flex-direction: column;
  height: 100%;
  border-radius: 17px;
  overflow: hidden;
  background-color: #fff;
  color: #4a5763;
}

.screen svg {
  flex: none;
}

.head {
  background-color: #e1e6ea;
  border-bottom: 1px solid #9aabb9;
  flex: none;
}

.head-home { height: 62px; }
.head-46 { height: 47px; }
.head-64 { height: 65px; }

.status {
  display: flex;
  align-items: center;
  justify-content: space-between;
  height: 20px;
  padding: 0 9px 0 14px;
  color: #2e3a47;
  font-size: 6.5px;
  font-weight: 700;
}

.sig {
  width: 30px;
  height: 8px;
}

.ico-s {
  width: 10px;
  height: 10px;
  color: #3e4c59;
}

.ico-m {
  width: 11px;
  height: 11px;
  color: #3e4c59;
}

.ico-back {
  width: 7px;
  height: 10px;
  color: #3e4c59;
}

.ico-star {
  width: 6px;
  height: 6px;
  margin-right: 1.5px;
  color: #3e4c59;
}

.ico-clock {
  width: 8px;
  height: 8px;
  color: #3e4c59;
}

.search {
  display: flex;
  align-items: center;
  justify-content: space-between;
  height: 14px;
  padding: 0 5px;
  background-color: #fff;
  border: 1px solid #cdd5dc;
  color: #a7b2bc;
  font-size: 6.5px;
}

/* Home */
.home-row {
  display: flex;
  align-items: center;
  padding-left: 13px;
}

.search-home {
  width: 108px;
  margin-right: 9px;
}

.home-row .ico-m + .ico-m {
  margin-left: 7px;
}

.wallet {
  display: flex;
  align-items: center;
  height: 24px;
  margin: -13px 10px 0;
  padding: 0 11px;
  background-color: #fff;
  border: 1px solid #dfe4e9;
  border-radius: 12px;
  font-size: 6.5px;
  position: relative;
}

.wallet-amt {
  margin: 0 auto 0 7px;
}

.wallet .wallet-amt + .ico-m {
  margin-right: 8px;
}

.banner-top {
  height: 25px;
  margin: 6px 20px 0;
  border: 1px solid #b5c0ca;
  font-size: 6.8px;
  line-height: 23px;
  text-align: center;
}

.cats {
  display: grid;
  grid-template-columns: repeat(3, 48.5px);
  grid-auto-rows: 52px;
  margin: 6px 0 0 11px;
}

.cat {
  padding: 0 7px;
  font-size: 6.5px;
  line-height: 9px;
  text-align: center;
}

.cat-ring {
  display: flex;
  align-items: center;
  justify-content: center;
  width: 25px;
  height: 25px;
  margin: 0 auto 4px;
  background-color: #dfe4e9;
  border: 1px solid #9aabb9;
  border-radius: 50%;
  color: #3e4c59;
}

.cat-ring svg {
  width: 15px;
  height: 15px;
}

.carousel {
  display: flex;
  gap: 8px;
  height: 37px;
  margin-top: 17px;
  flex: none;
}

.car-side {
  background-color: #e1e6ea;
  border: 1px solid #c5ced6;
}

.car-left { width: 10px; border-left: none; }
.car-right { width: 13px; border-right: none; }

.car-main {
  width: 128px;
  border: 1px solid #c5ced6;
  font-size: 7.5px;
  line-height: 35px;
  text-align: center;
  letter-spacing: 0.2px;
}

.more-pill {
  height: 12px;
  margin: 10px 11px 0;
  border: 1px solid #c5ced6;
  border-radius: 6px;
  font-size: 5.8px;
  line-height: 10px;
  text-align: center;
  flex: none;
}

.bottom-nav {
  display: flex;
  justify-content: space-between;
  height: 37px;
  margin-top: auto;
  padding: 6px 10px 0 11px;
  background-color: #e1e6ea;
  border-top: 1px solid #9aabb9;
  flex: none;
}

.nav-item {
  display: flex;
  flex-direction: column;
  align-items: center;
  gap: 3px;
  width: 24px;
  font-size: 7.5px;
  letter-spacing: 0.1px;
}

/* Search */
.head-row {
  display: flex;
  align-items: center;
  height: 14px;
  padding-left: 8px;
}

.search-grow {
  width: 137px;
  margin-left: 7px;
}

.svc-list {
  display: flex;
  flex-direction: column;
  gap: 3.7px;
  margin: 9px 8px 0 6px;
}

.svc {
  display: flex;
  align-items: center;
  justify-content: space-between;
  height: 18px;
  padding: 0 5px 0 6px;
  border: 1px solid #cdd5dc;
  border-radius: 9px;
  font-size: 7.2px;
  letter-spacing: 0.15px;
}

/* Result */
.head-title {
  margin-left: 9px;
  font-size: 7.5px;
  letter-spacing: 0.1px;
}

.search-result {
  width: 150px;
  margin: 5px 0 0 8px;
}

.rec {
  display: flex;
  align-items: center;
  height: 8px;
  margin: 6px 0 0 8px;
  font-size: 5.5px;
}

.emoji {
  width: 6px;
  height: 6px;
  margin-left: 1px;
  background-color: #efb04a;
  border-radius: 50%;
}

.cards {
  display: flex;
  flex-direction: column;
  gap: 11px;
  margin: 6px 7px 0 6px;
}

.card {
  height: 94px;
  border: 1px solid #c5ced6;
  flex: none;
}

.card-img {
  display: flex;
  align-items: center;
  justify-content: center;
  height: 53px;
  border-bottom: 1px solid #c5ced6;
}

.card-img svg {
  width: 14px;
  height: 12px;
  color: #3e4c59;
}

.card-body {
  padding: 4px 7px 0 5px;
}

.card-name {
  font-size: 7.5px;
  line-height: 10px;
  letter-spacing: 0.2px;
}

.card-rate {
  display: flex;
  align-items: center;
  font-size: 7.5px;
  line-height: 11px;
}

.card-rate span {
  margin-left: 3px;
  color: #bcc6cf;
  font-size: 6px;
}

.card-foot {
  display: flex;
  justify-content: space-between;
  font-size: 6.5px;
  line-height: 12px;
}

.meter {
  color: #bcc6cf;
  font-size: 5px;
  line-height: 8px;
}

/* Service1 detail */
.hero {
  height: 87px;
  position: relative;
  background-color: #e1e6ea;
  flex: none;
}

.hero-back {
  display: flex;
  align-items: center;
  justify-content: center;
  position: absolute;
  top: 18px;
  left: 10px;
  width: 14px;
  height: 14px;
  background-color: #fff;
  border: 1px solid #9aabb9;
  border-radius: 50%;
}

.hero-back .ico-back {
  width: 5px;
  height: 8px;
}

.hero-img {
  display: block;
  width: 26px;
  height: 25px;
  margin: 11px auto 0;
}

.dots {
  display: flex;
  justify-content: center;
  gap: 4px;
  margin-top: 15px;
}

.dots i {
  width: 10px;
  height: 10px;
  border: 1px solid #8b9aa8;
  border-radius: 50%;
}

.dots .dot-on {
  background-color: #c5ced6;
}

.detail {
  padding: 5px 0 0 10px;
}

.detail-name {
  margin-top: 3px;
  color: #2e3a47;
  font-size: 11.5px;
  line-height: 16px;
  letter-spacing: 0.1px;
  white-space: nowrap;
}

.detail-meta {
  display: flex;
  align-items: center;
  height: 14px;
  margin-top: 5px;
  padding-left: 1px;
  font-size: 7.5px;
  white-space: nowrap;
}

.vsep {
  width: 1.5px;
  height: 12px;
  margin: 0 7px 0 8px;
  background-color: #c5ced6;
  flex: none;
}

.hours {
  margin-left: 2px;
  font-size: 5.6px;
  line-height: 6px;
}

.vsep-2 {
  margin: 0 5px 0 11px;
}

.rev {
  color: #bcc6cf;
  font-size: 6.6px;
}

.rule {
  width: 143px;
  height: 1px;
  margin: 10px 0 0;
  background-color: #9aabb9;
  border: none;
}

.rule-2 {
  width: 144px;
  margin-top: 9.5px;
}

.sub-head {
  margin-top: 8px;
  font-size: 7.5px;
  line-height: 10px;
  letter-spacing: 0.2px;
}

.sub-head-2 {
  margin-top: 6.5px;
}

.desc {
  margin: 4px 0 0;
  font-size: 5.6px;
  line-height: 7.17px;
  white-space: nowrap;
}

.addr-row {
  display: flex;
  gap: 12px;
  margin-top: 7px;
  padding-left: 2px;
}

.map {
  width: 66px;
  height: 42px;
}

.addr {
  width: 66px;
  padding-top: 1px;
  font-size: 5.5px;
  line-height: 6.7px;
  white-space: nowrap;
}

.telp {
  margin-top: 8px;
}

.buy {
  display: flex;
  align-items: center;
  justify-content: space-between;
  height: 48px;
  margin-top: auto;
  padding: 0 9px 6px 15px;
  border-top: 1px solid #e1e6ea;
  flex: none;
}

.buy-from {
  color: #7c8a99;
  font-size: 7px;
  line-height: 11px;
  letter-spacing: 0.2px;
}

.buy-price {
  color: #2e3a47;
  font-size: 11px;
  line-height: 15px;
  letter-spacing: 0.4px;
}

.btn-pick {
  width: 51px;
  height: 18px;
  margin-top: 10px;
  background-color: #6557f5;
  border-radius: 1px;
  color: #fff;
  font-size: 7.5px;
  font-weight: 500;
  line-height: 18px;
  text-align: center;
}

/* Service1 form */
.complaints {
  padding: 0 15px 0 8px;
  flex: none;
}

.form-head {
  color: #2e3a47;
  font-size: 8.7px;
  font-weight: 700;
  line-height: 12px;
  letter-spacing: 0.15px;
  white-space: nowrap;
}

.complaints .form-head {
  margin-top: 7px;
}

.check {
  display: flex;
  align-items: center;
  gap: 4px;
  height: 17px;
  padding-bottom: 5px;
  margin-bottom: 7px;
  border-bottom: 1px solid #c5ced6;
  font-size: 7px;
  letter-spacing: 0.2px;
}

.check i {
  width: 8px;
  height: 8px;
  border: 1px solid #c5ced6;
  border-radius: 1px;
  flex: none;
}

.check-wide {
  height: 22px;
  padding-top: 3px;
  padding-bottom: 8px;
}

.check-last {
  height: 13px;
  margin-bottom: 0;
  padding-bottom: 0;
  border-bottom: none;
}

.services {
  margin-top: 5px;
  padding: 0 15px 0 10px;
  border-top: 1px solid #c5ced6;
  flex: none;
}

.form-head-2 {
  margin: 6px 0 -5px;
}

.svc-item {
  height: 48px;
  padding-top: 13px;
  border-bottom: 1px solid #9aabb9;
}

.svc-top {
  display: flex;
  align-items: center;
  justify-content: space-between;
  font-size: 7.2px;
  line-height: 9px;
  white-space: nowrap;
}

.stepper {
  display: flex;
  align-items: center;
  gap: 5px;
}

.stepper svg {
  width: 9px;
  height: 9px;
  color: #3e4c59;
}

.stepper b {
  width: 9px;
  font-weight: 400;
  text-align: center;
}

.svc-sub {
  margin-top: 1px;
  color: #7c8a99;
  font-size: 4.9px;
  line-height: 8px;
  white-space: nowrap;
}

.svc-price {
  margin-top: 3px;
  font-size: 7.5px;
  line-height: 11px;
  text-align: right;
}

/* Service2 */
.band {
  padding: 0 0 0 9px;
  border-top: 1px solid #c5ced6;
  border-bottom: 1px solid #c5ced6;
  flex: none;
}

.band-ask {
  height: 56px;
  margin-top: 8px;
  padding-top: 7px;
}

.toggle {
  display: flex;
  align-items: center;
  width: 21px;
  height: 12px;
  margin-top: 3px;
  padding-left: 1px;
  background-color: #dfe4e9;
  border-radius: 6px;
}

.toggle i {
  width: 10px;
  height: 10px;
  background-color: #fff;
  border-radius: 50%;
}

.band-date {
  height: 100px;
  margin-top: 8px;
  padding-top: 7px;
}

.date-grid {
  display: grid;
  grid-template-columns: repeat(4, 36px);
  grid-auto-rows: 18px;
  width: 145px;
  margin-top: 2px;
  border-top: 1px solid #c5ced6;
  border-left: 1px solid #c5ced6;
}

.date-grid i, .time-grid i {
  border-right: 1px solid #c5ced6;
  border-bottom: 1px solid #c5ced6;
}

.band-time {
  height: 57px;
  margin-top: 8px;
  padding-top: 6px;
}

.time-grid {
  display: grid;
  grid-template-columns: repeat(2, 72px);
  width: 145px;
  height: 18px;
  margin-top: 4px;
  border-top: 1px solid #c5ced6;
  border-left: 1px solid #c5ced6;
}

.band-total {
  height: 80px;
  margin-top: 11px;
  padding: 12px 0 0 14px;
  border-bottom: none;
}

.total-head {
  margin-left: -5px;
  padding: 0 0 3px 5px;
  border-bottom: 1px solid #9aabb9;
}

.total-row {
  display: flex;
  align-items: center;
  margin-top: 9px;
  font-size: 7px;
}

.btn-next {
  width: 58px;
  height: 19px;
  margin-left: 51px;
  padding-left: 9px;
  background-color: #6557f5;
  border-radius: 1px;
  color: #fff;
  font-size: 7.5px;
  font-weight: 500;
  line-height: 19px;
  flex: none;
}

/* Зум и помощь */
.zoombox {
  display: flex;
  align-items: center;
  position: absolute;
  top: 601px;
  left: 1098px;
  z-index: 3;
  width: 115px;
  height: 33px;
  background-color: #fff;
  border-radius: 3px;
  box-shadow: 0 1px 4px rgba(60, 80, 100, 0.15);
  color: #6b7885;
}

.z-btn {
  width: 32px;
  text-align: center;
  font-size: 22px;
  line-height: 33px;
}

.z-val {
  width: 51px;
  border-left: 1px solid #eef1f4;
  border-right: 1px solid #eef1f4;
  font-size: 12px;
  font-weight: 500;
  line-height: 33px;
  text-align: center;
}

.help {
  position: absolute;
  top: 601px;
  left: 1230px;
  z-index: 3;
  width: 32px;
  height: 32px;
  background-color: #fff;
  border-radius: 50%;
  box-shadow: 0 1px 4px rgba(60, 80, 100, 0.15);
  color: #6b7885;
  font-size: 17px;
  line-height: 32px;
  text-align: center;
}

/* Панель задач */
.taskbar {
  display: flex;
  align-items: center;
  height: 42px;
  background-color: #1a1a1b;
  border-top: 1px solid #33343a;
  flex: none;
}

.win-logo {
  width: 21px;
  height: 21px;
  margin-left: 31px;
  flex: none;
}

.task-search {
  display: flex;
  align-items: center;
  width: 195px;
  height: 25px;
  margin-left: 12px;
  padding: 0 7px 0 10px;
  background-color: #3b3b3d;
  border-radius: 13px;
  color: #e0e0e0;
  font-size: 12px;
}

.task-glass {
  width: 14px;
  height: 14px;
  margin-right: 9px;
}

.task-bing {
  width: 18px;
  height: 18px;
  margin-left: auto;
}

.task-apps {
  display: flex;
  margin-left: 0.5px;
}

.app {
  display: flex;
  align-items: center;
  justify-content: center;
  width: 39.2px;
  height: 37px;
  position: relative;
}

.app svg {
  width: 22px;
  height: 22px;
}

.app-open::after, .app-now::after {
  content: "";
  position: absolute;
  left: 17.5px;
  bottom: 0;
  width: 4px;
  height: 2px;
  background-color: #8e8e90;
  border-radius: 1px;
}

.app-now {
  background-color: #2c2c2e;
  border-radius: 4px;
}

.app-now::after {
  left: 10px;
  width: 18px;
  background-color: #c9a6e8;
}

.count {
  position: absolute;
  top: 3px;
  right: 2px;
  min-width: 14px;
  height: 14px;
  padding: 0 2px;
  background-color: #d8a6e8;
  border-radius: 7px;
  color: #222;
  font-size: 8px;
  font-weight: 400;
  line-height: 14px;
  text-align: center;
}

.pfp {
  position: absolute;
  top: 4px;
  right: 7px;
  width: 12px;
  height: 12px;
  background-color: #a89a8c;
  border-radius: 50%;
}

.tray {
  display: flex;
  align-items: center;
  gap: 8px;
  margin-left: 18px;
}

.tray-i {
  width: 14px;
  height: 14px;
}

.tray-i:nth-child(1), .tray-i:nth-child(2) {
  margin-right: 7px;
}

.clock {
  width: 50px;
  margin-left: 11.5px;
  color: #f0f0f0;
  font-size: 10.5px;
  line-height: 15px;
  text-align: right;
}

.notif {
  width: 17px;
  height: 17px;
  margin-left: 9px;
  background-color: #d8b2ee;
  border-radius: 50%;
  color: #222;
  font-size: 9px;
  line-height: 17px;
  text-align: center;
}

/* Регистрация */
.screen-reg {
  display: block;
}

.stub {
  height: 173px;
  margin: 0 30px;
  border-bottom: 1px solid #c5ced6;
}

.f-label {
  display: block;
  margin: 14px 0 0 13px;
  color: #3e4c59;
  font-size: 6px;
  font-weight: 700;
  line-height: 8px;
}

.f-label-2 {
  margin-top: 13px;
}

.f-input {
  height: 18px;
  margin: 0 12px;
  padding-left: 5px;
  border: 1px solid #c5ced6;
  color: #bcc6cf;
  font-size: 7.8px;
  line-height: 16px;
}

.forgot {
  margin: 9px 16px 0 0;
  color: #6557d8;
  font-size: 7.7px;
  line-height: 9px;
  text-align: right;
}

.btn-register {
  height: 22px;
  margin: 12px 16px 0;
  background-color: #6557f5;
  color: #fff;
  font-size: 8.5px;
  font-weight: 500;
  line-height: 22px;
  text-align: center;
}

.have-acc {
  margin-top: 23px;
  color: #2aa198;
  font-size: 7.7px;
  line-height: 9px;
  text-align: center;
}

.have-acc span {
  color: #6557d8;
}
```
